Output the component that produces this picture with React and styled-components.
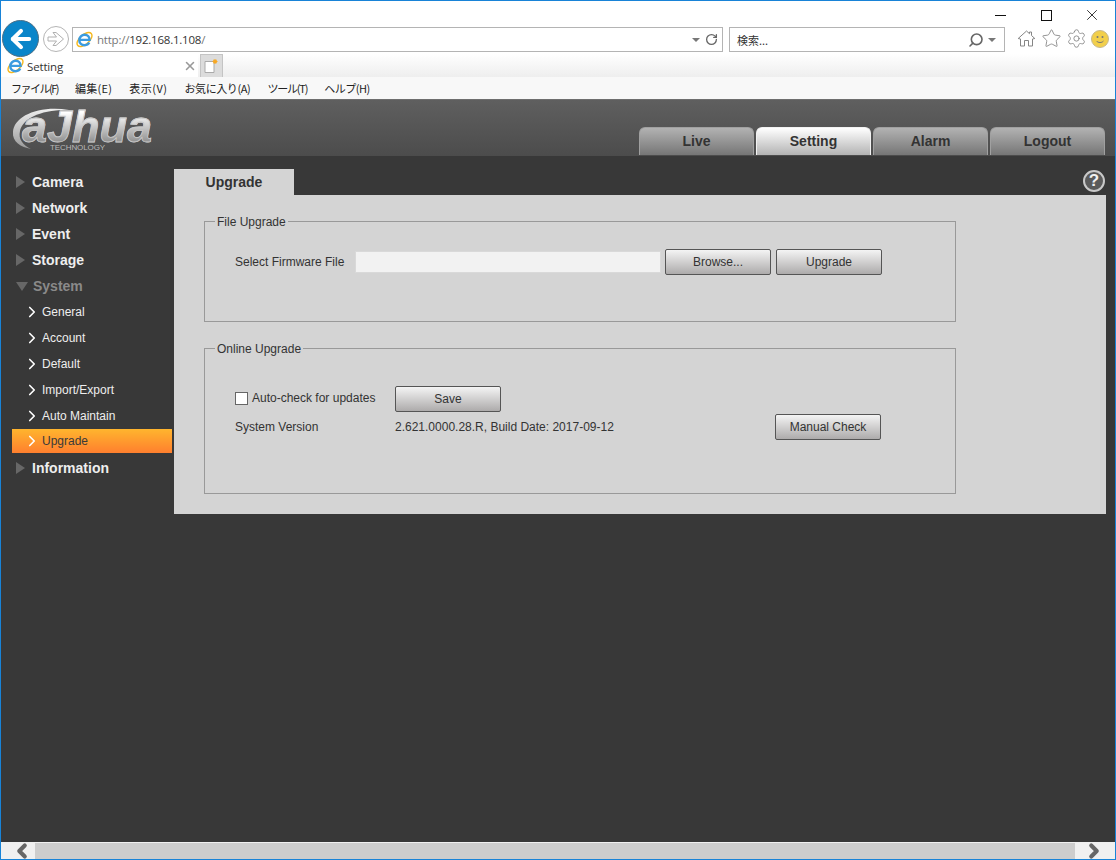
import React from "react";
import styled, { createGlobalStyle } from "styled-components";
import { Star, Settings, Search, RotateCw, X, ArrowLeft, ChevronRight, ChevronLeft } from "lucide-react";

const GlobalStyle = createGlobalStyle`
  html, body {
    margin: 0;
    height: 100%;
    overflow: hidden;
  }
  * {
    box-sizing: border-box;
  }
`;

const Window = styled.div`
  height: 100vh;
  display: flex;
  flex-direction: column;
  border: 1px solid #1883d7;
  background: #fff;
  font-family: "Liberation Sans", Arial, sans-serif;
`;

const TitleBar = styled.div`
  height: 26px;
  display: flex;
  justify-content: flex-end;
  flex: none;
`;

const WinButton = styled.div`
  width: 46px;
  height: 26px;
  display: flex;
  justify-content: center;
  align-items: center;
  padding-top: 2px;
  color: #111;
`;

const MinimizeGlyph = styled.span`
  width: 11px;
  height: 1px;
  background: #111;
`;

const MaximizeGlyph = styled.span`
  width: 11px;
  height: 11px;
  border: 1px solid #111;
`;

const AddressRow = styled.div`
  height: 27px;
  flex: none;
  display: flex;
  align-items: flex-start;
  padding-left: 1px;
`;

const BackButton = styled.div`
  width: 37px;
  height: 37px;
  margin-top: -7px;
  border-radius: 50%;
  background: #0a85c9;
  border: 1px solid #4d6f85;
  display: flex;
  justify-content: center;
  align-items: center;
  color: #fff;
  position: relative;
  z-index: 2;
  flex: none;
`;

const ForwardButton = styled.div`
  width: 26px;
  height: 26px;
  margin: -1px 3px 0 4px;
  border-radius: 50%;
  border: 1px solid #b5b5b5;
  display: flex;
  justify-content: center;
  align-items: center;
  flex: none;
`;

const InputBox = styled.div`
  height: 25px;
  width: ${(p) => p.$width}px;
  margin-right: ${(p) => p.$gap}px;
  border: 1px solid #b4b4b4;
  display: flex;
  align-items: center;
  font-size: 12px;
  flex: none;
`;

const SiteIcon = styled.span`
  display: flex;
  margin-left: 3px;
`;

const Url = styled.span`
  color: #777;
  margin-left: 4px;
  flex: 1;
  font-family: "Open Sans", sans-serif;
  font-size: 11.5px;
  letter-spacing: -0.22px;
  b {
    color: #333;
    font-weight: 400;
  }
`;

const RefreshIcon = styled(RotateCw)`
  color: #666;
  margin-right: 4px;
`;

const SearchText = styled.span`
  flex: 1;
  margin-left: 7px;
  color: #333;
  font-family: "Noto Sans CJK JP", sans-serif;
  font-size: 11px;
`;

const SearchIcon = styled(Search)`
  color: #666;
  transform: scaleX(-1);
`;

const Caret = styled.span`
  width: 0;
  height: 0;
  border-left: 4px solid transparent;
  border-right: 4px solid transparent;
  border-top: 4px solid #777;
  margin: 0 ${(p) => p.$right || 5}px 0 4px;
`;

const ToolIcons = styled.div`
  display: flex;
  align-items: center;
  gap: 4px;
  margin-top: 1px;
  color: #858585;
`;

const Smile = styled.svg`
  width: 18px;
  height: 18px;
`;

const TabRow = styled.div`
  height: 23px;
  flex: none;
  display: flex;
  align-items: stretch;
  background: linear-gradient(#fff, #eee);
`;

const BrowserTab = styled.div`
  width: 197px;
  background: #fff;
  display: flex;
  align-items: center;
  padding: 0 1px 0 6px;
  font-family: "Open Sans", sans-serif;
  font-size: 11.5px;
  color: #333;
  gap: 3px;
  span {
    flex: 1;
    margin-top: 2px;
    letter-spacing: -0.15px;
  }
`;

const NewTab = styled.div`
  width: 23px;
  margin-left: 2px;
  background: #dcdcdc;
  border: 1px solid #c4c4c4;
  border-bottom: none;
  display: flex;
  justify-content: center;
  align-items: center;
`;

const MenuBar = styled.div`
  height: 22px;
  flex: none;
  background: #f8f8f8;
  display: flex;
  align-items: center;
  gap: 17px;
  padding: 0 0 1px 10px;
  font-family: "Noto Sans CJK JP", sans-serif;
  font-size: 11px;
  color: #222;
`;

const MenuItem = styled.span`
  letter-spacing: ${(p) => p.$track}px;
`;

const Header = styled.div`
  height: 57px;
  flex: none;
  background: linear-gradient(#5f5f5f, #4c4c4c);
  border-top: 1px solid #6e6e6e;
  display: flex;
  justify-content: space-between;
  align-items: flex-end;
  padding: 0 10px 1px 0;
`;

const Logo = styled.div`
  position: relative;
  align-self: flex-start;
  width: 152px;
  height: 55px;
`;

const LogoWord = styled.span`
  position: absolute;
  left: 21px;
  top: 9px;
  font-size: 45px;
  line-height: 35px;
  font-weight: 700;
  font-style: italic;
  letter-spacing: 0;
  background: linear-gradient(#fff 10%, #8f8f8f 95%);
  -webkit-background-clip: text;
  background-clip: text;
  -webkit-text-fill-color: transparent;
  -webkit-text-stroke: 0.8px #c8c8c8;
`;

const LogoSwoosh = styled.svg`
  position: absolute;
  left: 0;
  top: 0;
`;

const LogoTag = styled.span`
  position: absolute;
  left: 49px;
  top: 43px;
  font-size: 8px;
  line-height: 9px;
  letter-spacing: -0.1px;
  color: #b8b8b8;
`;

const NavTabs = styled.div`
  display: flex;
  gap: 2px;
`;

const NavTab = styled.div`
  width: 115px;
  height: 28px;
  padding-bottom: 2px;
  border-radius: 6px 6px 0 0;
  border: 1px solid ${(p) => (p.$active ? "#f2f2f2" : "#a0a0a0")};
  border-bottom: none;
  background: ${(p) =>
    p.$active ? "linear-gradient(#fff, #b3b3b3)" : "linear-gradient(#b2b2b2, #767676)"};
  display: flex;
  justify-content: center;
  align-items: center;
  font-size: 14px;
  font-weight: 700;
  color: #333;
`;

const Main = styled.div`
  flex: 1;
  min-height: 0;
  background: #383838;
  display: flex;
  padding: 13px 9px 0 11px;
  gap: 2px;
`;

const Sidebar = styled.div`
  width: 160px;
  flex: none;
`;

const GroupRow = styled.div`
  height: 26px;
  display: flex;
  align-items: center;
  gap: 6px;
  padding-left: 4px;
  font-size: 14px;
  font-weight: 700;
  color: ${(p) => (p.$open ? "#8a8a8a" : "#eeeeee")};
`;

const TriangleRight = styled.span`
  width: 0;
  height: 0;
  border-top: 6px solid transparent;
  border-bottom: 6px solid transparent;
  border-left: 9px solid #676767;
  margin-right: 1px;
`;

const TriangleDown = styled.span`
  width: 0;
  height: 0;
  border-left: 6px solid transparent;
  border-right: 6px solid transparent;
  border-top: 9px solid #676767;
  margin-right: -1px;
`;

const SubRow = styled.div`
  height: ${(p) => (p.$active ? 24 : 26)}px;
  margin-bottom: ${(p) => (p.$active ? 2 : 0)}px;
  display: flex;
  align-items: center;
  gap: 1px;
  padding-left: 11px;
  font-size: 12px;
  color: ${(p) => (p.$active ? "#3a3a3a" : "#eeeeee")};
  background: ${(p) => (p.$active ? "linear-gradient(#ffb52e, #ff7f2e)" : "none")};
  svg {
    color: #fff;
  }
`;

const Content = styled.div`
  flex: 1;
  min-width: 0;
`;

const ContentHead = styled.div`
  height: 26px;
  display: flex;
  justify-content: space-between;
`;

const ContentTab = styled.div`
  width: 120px;
  background: #d4d4d4;
  display: flex;
  justify-content: center;
  align-items: center;
  font-size: 14px;
  font-weight: 700;
  color: #333;
`;

const HelpIcon = styled.div`
  width: 22px;
  height: 22px;
  margin: 1px 1px 0 0;
  border-radius: 50%;
  border: 2px solid #c8c8c8;
  background: #5a5a5a;
  color: #f0f0f0;
  display: flex;
  justify-content: center;
  align-items: center;
  font-size: 17px;
  font-weight: 700;
`;

const Panel = styled.div`
  height: 319px;
  background: #d4d4d4;
  padding: 19px 30px 20px;
  display: flex;
  flex-direction: column;
  gap: 19px;
  font-size: 12px;
  color: #333;
`;

const Group = styled.fieldset`
  width: 752px;
  height: ${(p) => p.$height}px;
  margin: 0;
  padding: 0 0 0 10px;
  border: 1px solid #999;
  min-width: 0;
`;

const GroupTitle = styled.legend`
  padding: 1px 2px 0;
  line-height: 14px;
  font-size: 12px;
`;

const FileRow = styled.div`
  display: flex;
  align-items: center;
  padding: 20px 0 0 20px;
`;

const FieldLabel = styled.span`
  width: 120px;
`;

const FileInput = styled.div`
  width: 306px;
  height: 22px;
  background: #f2f2f2;
  border: 1px solid #d9d9d9;
  margin-right: 4px;
`;

const Button = styled.div`
  width: 106px;
  height: 26px;
  margin-right: ${(p) => p.$gap || 0}px;
  border: 1px solid #555;
  border-radius: 2px;
  background: linear-gradient(#f4f4f4, #adabab);
  display: flex;
  justify-content: center;
  align-items: center;
  font-size: 12px;
  color: #333;
`;

const OnlineGrid = styled.div`
  display: grid;
  grid-template-columns: 160px 380px 106px;
  grid-template-rows: 26px 26px;
  row-gap: 2px;
  align-items: center;
  padding: 30px 0 0 20px;
`;

const CheckLabel = styled.label`
  display: flex;
  align-items: center;
  gap: 4px;
  grid-column: 1;
  margin-bottom: 2px;
  white-space: nowrap;
`;

const CheckBox = styled.span`
  width: 13px;
  height: 13px;
  background: #fff;
  border: 1px solid #666;
`;

const SaveCell = styled.div`
  grid-column: 2 / span 2;
`;

const ScrollBar = styled.div`
  height: 17px;
  flex: none;
  background: #f0f0f0;
  display: flex;
  align-items: center;
  color: #666;
`;

const ScrollEnd = styled.div`
  width: ${(p) => p.$width}px;
  height: 16px;
  display: flex;
  justify-content: center;
  align-items: center;
  padding: 0 ${(p) => p.$padRight || 0}px 0 ${(p) => p.$padLeft || 0}px;
`;

const ScrollThumb = styled.div`
  flex: 1;
  height: 16px;
  background: #cdcdcd;
`;

const IeIcon = () => (
  <svg width="17" height="17" viewBox="0 0 18 18" fill="none">
    <ellipse cx="9" cy="9" rx="9.6" ry="5" transform="rotate(-42 9 9)" stroke="#f5b81f" strokeWidth="1.5" />
    <path d="M4.2 9.4H14.4C14.4 6 12 4 9.3 4C6 4 3.5 6.5 3.5 9.8C3.5 13 6 15 9.3 15C11.5 15 13.1 14 14 12.2" stroke="#3a9be0" strokeWidth="2.6" />
  </svg>
);

const ForwardArrow = () => (
  <svg width="18" height="18" viewBox="0 0 18 18" fill="none" stroke="#b0b0b0">
    <path d="M1 7H9.5L6 2.5H9L16.5 9L9 15.5H6L9.5 11H1Z" />
  </svg>
);

const HomeGlyph = () => (
  <svg width="21" height="21" viewBox="-1.5 -1.5 21 21" fill="none" stroke="currentColor">
    <path d="M.7 9L9 1.5L12 4.2V2.5H14V6L17.3 9L15 9.5V16.5H11V11H7V16.5H3V9.5Z" />
  </svg>
);

const groupsTop = ["Camera", "Network", "Event", "Storage"];
const subItems = ["General", "Account", "Default", "Import/Export", "Auto Maintain"];
const menus = [
  { label: "ファイル(F)", track: -1.5 },
  { label: "編集(E)", track: 0.25 },
  { label: "表示(V)", track: 0.5 },
  { label: "お気に入り(A)", track: -0.4 },
  { label: "ツール(T)", track: -1.2 },
  { label: "ヘルプ(H)", track: -0.5 },
];

const SubItem = ({ label, active }) => (
  <SubRow $active={active}>
    <ChevronRight size={18} strokeWidth={2.2} />
    {label}
  </SubRow>
);

const App = () => (
  <>
    <GlobalStyle />
    <Window>
      <TitleBar>
        <WinButton><MinimizeGlyph /></WinButton>
        <WinButton><MaximizeGlyph /></WinButton>
        <WinButton><X size={18} strokeWidth={1.1} /></WinButton>
      </TitleBar>
      <AddressRow>
        <BackButton><ArrowLeft size={28} strokeWidth={3.5} /></BackButton>
        <ForwardButton><ForwardArrow /></ForwardButton>
        <InputBox $width={651} $gap={6}>
          <SiteIcon><IeIcon /></SiteIcon>
          <Url>http://<b>192.168.1.108</b>/</Url>
          <Caret />
          <RefreshIcon size={13} strokeWidth={2.4} />
        </InputBox>
        <InputBox $width={276} $gap={11}>
          <SearchText>検索...</SearchText>
          <SearchIcon size={16} strokeWidth={2.4} />
          <Caret $right={8} />
        </InputBox>
        <ToolIcons>
          <HomeGlyph />
          <Star size={21} strokeWidth={1} />
          <Settings size={21} strokeWidth={1} />
          <Smile viewBox="0 0 18 18">
            <circle cx="9" cy="9" r="8.5" fill="#f2cf4a" stroke="#c9b98a" />
            <circle cx="6.5" cy="7" r="1" fill="#777" />
            <circle cx="11.5" cy="7" r="1" fill="#777" />
            <path d="M5.5 11C7 13 11 13 12.5 11" fill="none" stroke="#777" />
          </Smile>
        </ToolIcons>
      </AddressRow>
      <TabRow>
        <BrowserTab>
          <IeIcon />
          <span>Setting</span>
          <X size={14} strokeWidth={2.6} color="#999" />
        </BrowserTab>
        <NewTab>
          <svg width="15" height="16" viewBox="0 0 15 16">
            <path d="M1 3.5H10V14.5H1Z" fill="#fff" stroke="#aaa" />
            <path d="M11 1V6M8.5 3.5H13.5M9.3 1.8L12.7 5.2M12.7 1.8L9.3 5.2" stroke="#f7a823" strokeWidth="1.1" />
          </svg>
        </NewTab>
      </TabRow>
      <MenuBar>
        {menus.map((m) => (
          <MenuItem key={m.label} $track={m.track}>{m.label}</MenuItem>
        ))}
      </MenuBar>
      <Header>
        <Logo>
          <LogoSwoosh width="80" height="55" viewBox="0 0 80 55">
            <defs>
              <linearGradient id="swoosh" x1="0" y1="0" x2="0" y2="1">
                <stop offset="0" stopColor="#eee" />
                <stop offset="1" stopColor="#999" />
              </linearGradient>
            </defs>
            <path d="M68 10C38 5 13 16 12 32C11 42 20 47 30 49C22 45 17 39 19 31C21 19 40 9 68 10Z" fill="url(#swoosh)" />
          </LogoSwoosh>
          <LogoWord>aJhua</LogoWord>
          <LogoTag>TECHNOLOGY</LogoTag>
        </Logo>
        <NavTabs>
          <NavTab>Live</NavTab>
          <NavTab $active>Setting</NavTab>
          <NavTab>Alarm</NavTab>
          <NavTab>Logout</NavTab>
        </NavTabs>
      </Header>
      <Main>
        <Sidebar>
          {groupsTop.map((g) => (
            <GroupRow key={g}>
              <TriangleRight />
              {g}
            </GroupRow>
          ))}
          <GroupRow $open>
            <TriangleDown />
            System
          </GroupRow>
          {subItems.map((s) => (
            <SubItem key={s} label={s} />
          ))}
          <SubItem label="Upgrade" active />
          <GroupRow>
            <TriangleRight />
            Information
          </GroupRow>
        </Sidebar>
        <Content>
          <ContentHead>
            <ContentTab>Upgrade</ContentTab>
            <HelpIcon>?</HelpIcon>
          </ContentHead>
          <Panel>
            <Group $height={108}>
              <GroupTitle>File Upgrade</GroupTitle>
              <FileRow>
                <FieldLabel>Select Firmware File</FieldLabel>
                <FileInput />
                <Button $gap={5}>Browse...</Button>
                <Button>Upgrade</Button>
              </FileRow>
            </Group>
            <Group $height={153}>
              <GroupTitle>Online Upgrade</GroupTitle>
              <OnlineGrid>
                <CheckLabel>
                  <CheckBox />
                  Auto-check for updates
                </CheckLabel>
                <SaveCell>
                  <Button>Save</Button>
                </SaveCell>
                <span>System Version</span>
                <span>2.621.0000.28.R, Build Date: 2017-09-12</span>
                <Button>Manual Check</Button>
              </OnlineGrid>
            </Group>
          </Panel>
        </Content>
      </Main>
      <ScrollBar>
        <ScrollEnd $width={34} $padLeft={8}><ChevronLeft size={22} strokeWidth={4.5} /></ScrollEnd>
        <ScrollThumb />
        <ScrollEnd $width={40} $padRight={2}><ChevronRight size={22} strokeWidth={4.5} /></ScrollEnd>
      </ScrollBar>
    </Window>
  </>
);

export default App;
